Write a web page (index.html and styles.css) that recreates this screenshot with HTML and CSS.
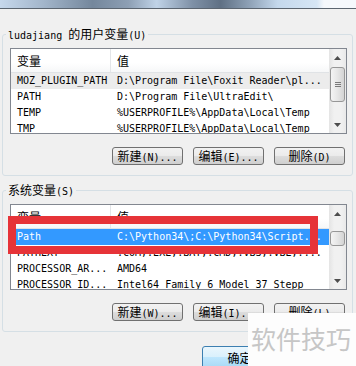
FILE: index.html
```html
<!DOCTYPE html>
<html lang="zh-CN">
<head>
    <meta charset="UTF-8">
    <meta name="viewport" content="width=device-width, initial-scale=1.0">
    <title>环境变量</title>
    <link rel="stylesheet" href="styles.css">
</head>
<body>

    <div class="titlebar"></div>

    <div class="dialog">

        <fieldset class="group">
            <legend>ludajiang <span class="cn">的用户变量</span>(U)</legend>
            <div class="list">
                <div class="list-body">
                    <div class="list-head">
                        <span class="col-name cn">变量</span>
                        <span class="col-value cn">值</span>
                    </div>
                    <div class="row inactive">
                        <span class="col-name">MOZ_PLUGIN_PATH</span>
                        <span class="col-value">D:\Program File\Foxit Reader\pl...</span>
                    </div>
                    <div class="row">
                        <span class="col-name">PATH</span>
                        <span class="col-value">D:\Program File\UltraEdit\</span>
                    </div>
                    <div class="row">
                        <span class="col-name">TEMP</span>
                        <span class="col-value">%USERPROFILE%\AppData\Local\Temp</span>
                    </div>
                    <div class="row">
                        <span class="col-name">TMP</span>
                        <span class="col-value">%USERPROFILE%\AppData\Local\Temp</span>
                    </div>
                </div>
                <div class="scrollbar">
                    <div class="arrow"><svg width="7" height="4" viewBox="0 0 7 4"><polygon points="0,4 3.5,0 7,4" fill="#4d4d4d"/></svg></div>
                    <div class="thumb tall"><div class="grip"></div></div>
                    <div class="track"></div>
                    <div class="arrow"><svg width="7" height="4" viewBox="0 0 7 4"><polygon points="0,0 3.5,4 7,0" fill="#4d4d4d"/></svg></div>
                </div>
            </div>
            <div class="buttons">
                <button><span class="cn">新建</span>(N)...</button>
                <button><span class="cn">编辑</span>(E)...</button>
                <button><span class="cn">删除</span>(D)</button>
            </div>
        </fieldset>

        <fieldset class="group system">
            <legend><span class="cn">系统变量</span>(S)</legend>
            <div class="list">
                <div class="list-body">
                    <div class="list-head">
                        <span class="col-name cn">变量</span>
                        <span class="col-value cn">值</span>
                    </div>
                    <div class="row selected">
                        <span class="col-name">Path</span>
                        <span class="col-value">C:\Python34\;C:\Python34\Script...</span>
                    </div>
                    <div class="row">
                        <span class="col-name">PATHEXT</span>
                        <span class="col-value">.COM;.EXE;.BAT;.CMD;.VBS;.VBE;....</span>
                    </div>
                    <div class="row">
                        <span class="col-name">PROCESSOR_AR...</span>
                        <span class="col-value">AMD64</span>
                    </div>
                    <div class="row">
                        <span class="col-name">PROCESSOR_ID...</span>
                        <span class="col-value">Intel64 Family 6 Model 37 Stepp</span>
                    </div>
                </div>
                <div class="scrollbar">
                    <div class="arrow"><svg width="7" height="4" viewBox="0 0 7 4"><polygon points="0,4 3.5,0 7,4" fill="#4d4d4d"/></svg></div>
                    <div class="thumb short"></div>
                    <div class="track"></div>
                    <div class="arrow"><svg width="7" height="4" viewBox="0 0 7 4"><polygon points="0,0 3.5,4 7,0" fill="#4d4d4d"/></svg></div>
                </div>
            </div>
            <div class="buttons">
                <button><span class="cn">新建</span>(W)...</button>
                <button><span class="cn">编辑</span>(I)...</button>
                <button><span class="cn">删除</span>(L)</button>
            </div>
        </fieldset>

        <div class="footer">
            <button class="default"><span class="cn">确定</span></button>
        </div>

    </div>

    <!-- annotation drawn over the screenshot -->
    <div class="highlight"></div>
    <div class="watermark">软件技巧</div>

</body>
</html>
```

FILE: styles.css
```css
body {
    margin: 0;
    background-color: #f0f0f0;
    font-family: "DejaVu Sans Mono", "Noto Sans CJK SC", monospace;
    font-size: 10px;
    color: #000;
    overflow: hidden;
    width: 356px;
    height: 366px;
    position: relative;
}
.cn {
    font-family: "Noto Sans CJK SC", sans-serif;
    font-size: 12px;
}
.titlebar {
    height: 8px;
    border-bottom: 1px solid #5b6570;
    background: linear-gradient(to right,
        #c6d8ec 0%, #a3b6cb 12%, #74879c 26%, #8d9fb4 36%,
        #c0d3e7 44%, #7f91a7 54%, #5f7084 62%, #8ea1b6 70%,
        #c4d8ec 78%, #d6e6f5 89%, #f5f8fc 91%, #f5f8fc 100%);
}
.dialog {
    display: flex;
    flex-direction: column;
    padding-top: 18px;
}

/* group boxes */
.group {
    box-sizing: border-box;
    width: 351px;
    min-inline-size: 0;
    margin: 0 0 0 2px;
    padding: 7px 5px 10px 7px;
    border: 1px solid #d5dfe5;
    border-radius: 3px;
}
.group.system {
    margin-top: 7px;
}
.group legend {
    height: 14px;
    line-height: 14px;
    padding: 0 2px;
    margin-left: -4px;
    white-space: nowrap;
}

/* list views */
.list {
    display: flex;
    height: 86px;
    box-sizing: border-box;
    border: 1px solid #828790;
    background-color: #fff;
}
.list-body {
    flex: 1;
    overflow: hidden;
}
.list-head {
    display: flex;
    height: 24px;
    box-sizing: border-box;
    border-bottom: 1px solid #e0e3e6;
    background: linear-gradient(#fff 0%, #fff 60%, #f6f7f8 100%);
    line-height: 23px;
}
.list-head .col-name {
    border-right: 1px solid #e3e5e8;
}
.row {
    display: flex;
    height: 16px;
    line-height: 16px;
    white-space: nowrap;
}
.col-name {
    box-sizing: border-box;
    width: 100px;
    flex-shrink: 0;
    padding-left: 6px;
    overflow: hidden;
}
.col-value {
    flex: 1;
    padding-left: 6px;
    overflow: hidden;
}
.row.inactive {
    background-color: #ececec;
}
.row.selected {
    background-color: #3399ff;
    color: #fff;
}

/* scrollbar */
.scrollbar {
    width: 17px;
    display: flex;
    flex-direction: column;
    background: linear-gradient(to right, #e4e4e4, #f1f1f1 30%, #f1f1f1 70%, #e9e9e9);
}
.arrow {
    height: 17px;
    display: flex;
    align-items: center;
    justify-content: center;
}
.arrow svg {
    display: block;
}
.thumb {
    margin: 1px 1px 0;
    border: 1px solid #979797;
    border-radius: 3px;
    background: linear-gradient(to right, #f4f4f4, #e6e6e6 50%, #d4d4d4);
    display: flex;
    align-items: center;
    justify-content: center;
}
.thumb.tall {
    height: 33px;
}
.thumb.short {
    height: 13px;
    margin-top: 9px;
}
.grip {
    width: 6px;
    height: 5px;
    background: repeating-linear-gradient(#7a7a7a 0 1px, transparent 1px 2px);
}
.track {
    flex: 1;
}

/* buttons */
.buttons {
    display: flex;
    justify-content: flex-end;
    gap: 10px;
    margin-top: 13px;
    padding-right: 2px;
}
button {
    box-sizing: border-box;
    width: 71px;
    height: 18px;
    padding: 0;
    border: 1px solid #707070;
    border-radius: 3px;
    background: linear-gradient(#f2f2f2 0%, #ebebeb 49%, #dddddd 50%, #cfcfcf 100%);
    font-family: "DejaVu Sans Mono", monospace;
    font-size: 10px;
    line-height: 16px;
    color: #000;
    white-space: nowrap;
}
.footer {
    display: flex;
    margin-top: 14px;
    padding-left: 202px;
}
.footer button {
    width: 75px;
    height: 23px;
    flex-shrink: 0;
    line-height: 21px;
}
.footer button.default {
    border-color: #3c7fb1;
    background: linear-gradient(#eaf6fd 0%, #d9f0fc 49%, #bee6fd 50%, #a7d9f5 100%);
}

/* overlays */
.highlight {
    position: absolute;
    left: 8px;
    top: 216px;
    width: 310px;
    height: 38px;
    box-sizing: border-box;
    border: 8px solid #e63338;
}
.watermark {
    position: absolute;
    left: 248px;
    top: 313px;
    width: 108px;
    height: 53px;
    box-sizing: border-box;
    padding: 13px 0 0 3px;
    background-color: #fdfdfd;
    color: #c6c6c6;
    font-family: "Noto Sans CJK SC", sans-serif;
    font-size: 25px;
    line-height: 25px;
    white-space: nowrap;
}
```
